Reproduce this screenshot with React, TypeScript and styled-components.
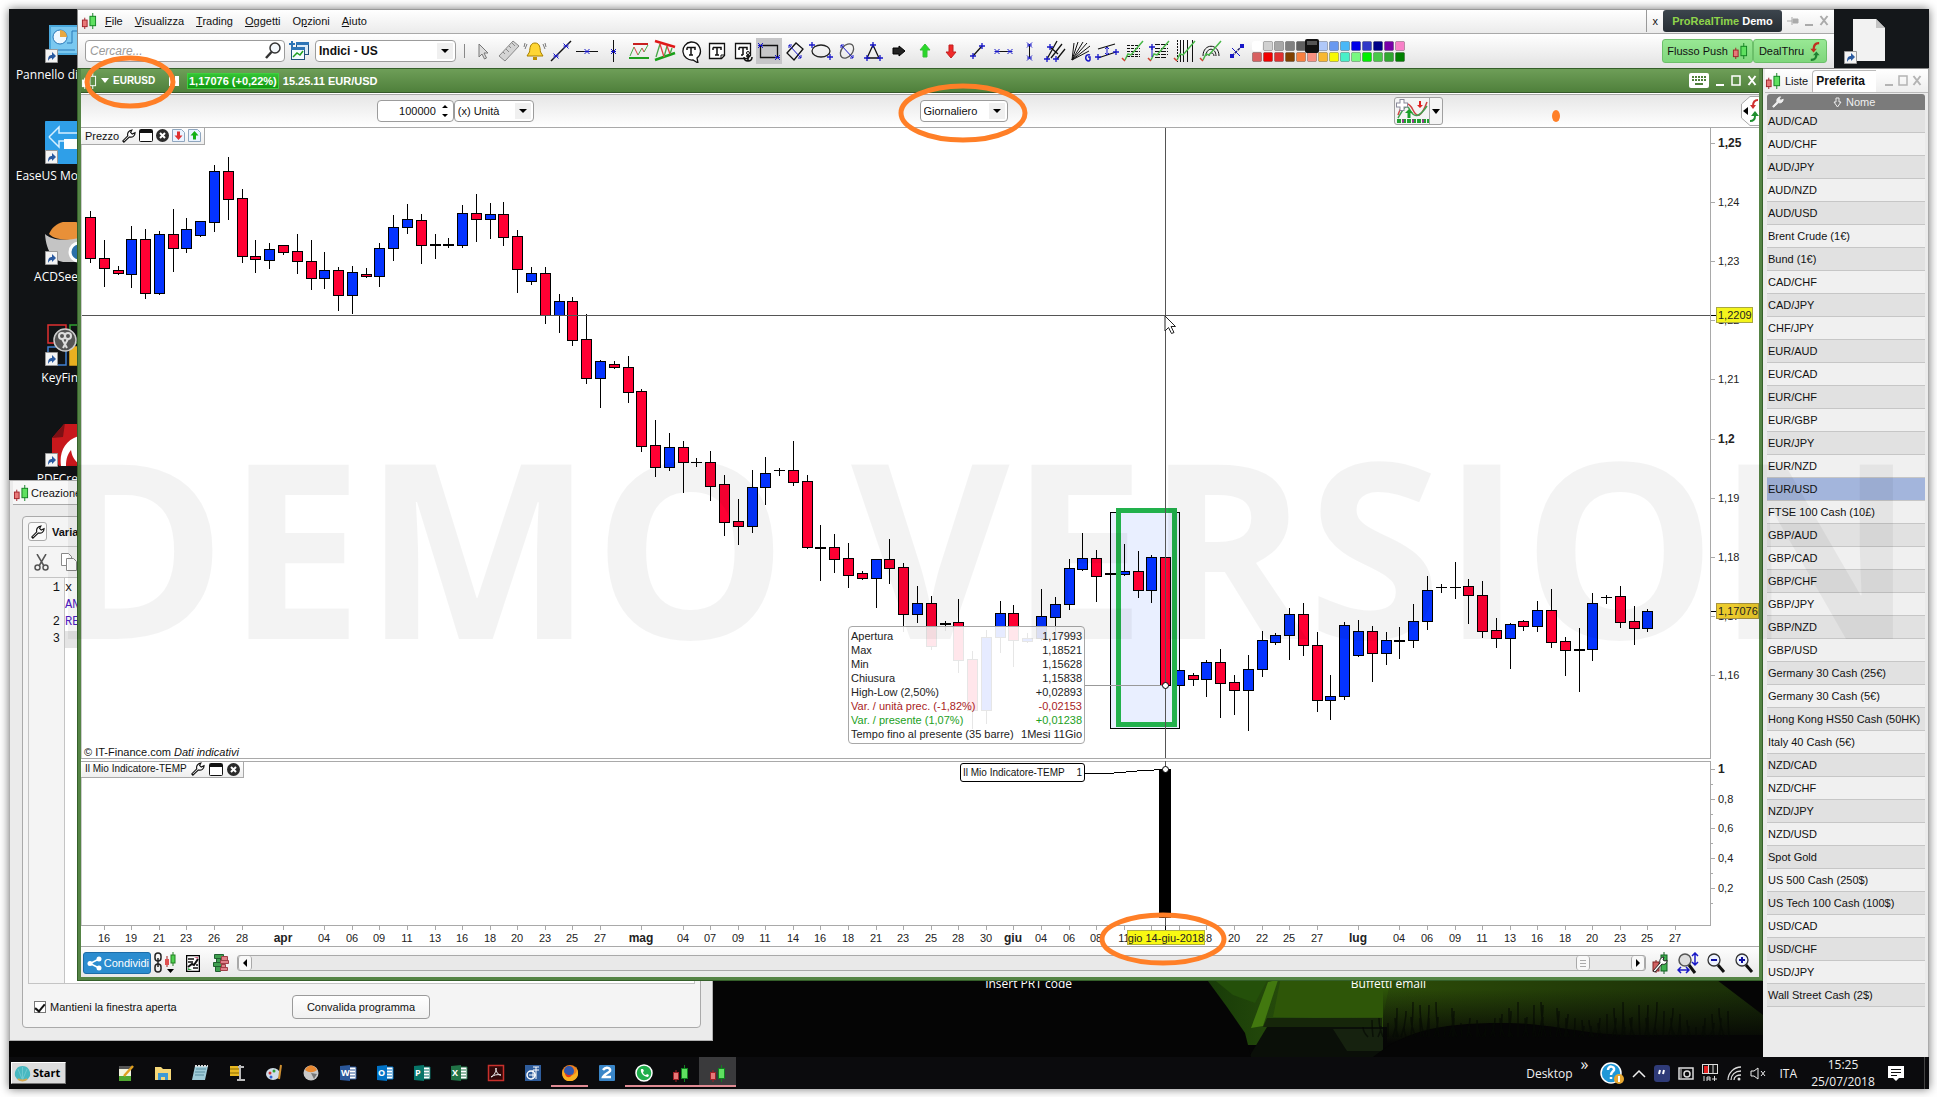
import React from 'react';
import styled, { createGlobalStyle, css } from 'styled-components';

const UI = '"Liberation Sans", Arial, sans-serif';
const SHELL = '"Open Sans", "Noto Sans", sans-serif';
const ORANGE = '#ff7f27';
const LINE = '#a9a9a9';

const Global = createGlobalStyle`
  * { box-sizing: border-box; }
  body { margin: 0; background: #fff; font: 11px/14px ${UI}; color: #111; }
  button, input, select { font: inherit; color: inherit; margin: 0; }
  svg { display: block; flex: none; }
`;

/* ---------- desktop ---------- */

const Page = styled.div`
  min-height: 100vh;
  padding: 9px 8px 8px 9px;
  display: flex;
  overflow: hidden;
`;
const Screen = styled.main`
  position: relative;
  flex: 1;
  overflow: hidden;
  display: flex;
  flex-direction: column;
  justify-content: space-between;
  background: #050505;
`;
const Frame = styled.div`
  flex: 1;
  display: flex;
  box-shadow: 0 0 9px rgba(0, 0, 0, 0.55);
`;
const Wallpaper = styled.svg`
  position: absolute;
  right: 166px;
  bottom: 32px;
`;
const Shortcuts = styled.nav`
  width: 69px;
  height: 471px;
  overflow: hidden;
  background: #111315;
  padding-top: 11px;
`;
const Shortcut = styled.a`
  height: 101px;
  display: flex;
  flex-direction: column;
  align-items: flex-end;
  gap: 2px;
  color: #fff;
  text-decoration: none;
  font: 12px/18px ${SHELL};
  white-space: nowrap;
`;
const FileCorner = styled.div`
  position: absolute;
  top: 0;
  right: 0;
  width: 95px;
  height: 59px;
  background: #14171a;
  padding: 10px 0 0 8px;
`;
const DesktopLabel = styled.a<{ $right: number }>`
  position: absolute;
  right: ${p => p.$right}px;
  bottom: 96px;
  color: #fff;
  text-decoration: none;
  font: 12px/18px ${SHELL};
`;

/* ---------- shared controls ---------- */

const IconButton = styled.button<{ $on?: boolean }>`
  border: 0;
  padding: 0;
  background: ${p => (p.$on ? '#c6c6c8' : 'none')};
  display: flex;
  align-items: center;
  justify-content: center;
`;
const Field = styled.label<{ $w: number }>`
  display: grid;
  align-items: center;
  width: ${p => p.$w}px;
  height: 22px;
  background: #fff;
  border: 1px solid #9c9c9c;
  border-radius: 4px;
  > * { grid-area: 1 / 1; }
  > svg { justify-self: end; pointer-events: none; }
`;
const fieldText = css`
  width: 100%;
  height: 20px;
  border: 0;
  background: none;
  outline: 0;
  padding: 0 4px;
`;
const SelectText = styled.select<{ $bold?: boolean }>`
  ${fieldText}
  appearance: none;
  padding: 0 3px;
  font-weight: ${p => (p.$bold ? 700 : 400)};
  font-size: ${p => (p.$bold ? 12 : 11)}px;
`;
const InputText = styled.input<{ $end?: boolean }>`
  ${fieldText}
  text-align: ${p => (p.$end ? 'right' : 'left')};
  padding-right: ${p => (p.$end ? 17 : 4)}px;
  &::placeholder { color: #9a9a9a; font-style: italic; opacity: 1; font-size: 12px; }
`;
const Spacer = styled.span`
  flex: 1;
`;

const Caret = () => (
  <svg width="20" height="20">
    <rect x="2" y="2" width="16" height="16" fill="#f0f0f0" />
    <path d="M6 8h8l-4 4z" fill="#000" />
  </svg>
);

type SelectProps = { label: string; value: string; width: number; bold?: boolean };
const Select = ({ label, value, width, bold }: SelectProps) => (
  <Field $w={width}>
    <SelectText aria-label={label} $bold={bold} defaultValue={value}>
      <option>{value}</option>
    </SelectText>
    <Caret />
  </Field>
);

/* ---------- small drawings ---------- */

const Candles = ({ size = 16, mono }: { size?: number; mono?: boolean }) => (
  <svg width={size} height={size} viewBox="0 0 17 17">
    <path d="M4 5v12" stroke={mono ? '#fff' : '#a02028'} />
    <rect x="1.5" y="7.5" width="5" height="7" fill={mono ? '#fff' : '#e87878'} stroke={mono ? '#fff' : '#a02028'} />
    <path d="M12.500 0v17" stroke={mono ? '#fff' : '#108020'} />
    <rect x="9.500" y="3.500" width="6" height="10" fill={mono ? '#5f9049' : '#5fe060'} stroke={mono ? '#fff' : '#108020'} />
  </svg>
);
const Wrench = ({ color = '#111', fill = '#fff', size = 14 }: { color?: string; fill?: string; size?: number }) => (
  <svg width={size} height={size} viewBox="0 0 15 15">
    <path d="M2 14.200 L.8 12.800 L6.200 7.400 C5.400 4.500 7 1.500 10.600 1 L9.200 3.600 L11 5.400 L14 4 C14 7.500 11.200 9.300 8 8.500z" fill={fill} stroke={color} strokeWidth="1.200" />
  </svg>
);
const WindowGlyph = () => (
  <svg width="14" height="13">
    <rect x=".5" y=".5" width="13" height="12" rx="1" fill="#fff" stroke="#111" />
    <path d="M1 1h12v3H1z" fill="#111" />
  </svg>
);
const CloseGlyph = () => (
  <svg width="13" height="13">
    <circle cx="6.500" cy="6.500" r="6.500" fill="#2b2b2b" />
    <path d="M4 4l5 5m0-5l-5 5" stroke="#fff" strokeWidth="2" />
  </svg>
);
const PageArrow = ({ up }: { up?: boolean }) => (
  <svg width="13" height="13">
    <path d="M.5.500h9l3 3v9H.500z" fill="#eaf3ff" stroke="#8fa6bf" />
    <path d={up ? 'M6.500 2l4 4.500h-2.500v4h-3v-4H2.500z' : 'M6.500 11l4-4.500h-2.500v-4h-3v4H2.500z'} fill={up ? '#12b012' : '#e03030'} />
  </svg>
);
const WinGlyphs = ({ color, box = true }: { color: string; box?: boolean }) => (
  <>
    <svg width="10" height="11"><path d="M1 10h8" stroke={color} strokeWidth="2" /></svg>
    {box && <svg width="10" height="11"><rect x="1" y="1" width="8" height="9" fill="none" stroke={color} strokeWidth="1.500" /></svg>}
    <svg width="10" height="11"><path d="M1.500 1l7 9m0-9l-7 9" stroke={color} strokeWidth="2" /></svg>
  </>
);
const DealArrows = ({ w = 14, h = 20 }: { w?: number; h?: number }) => (
  <svg width={w} height={h} viewBox="0 0 14 20">
    <path d="M12 1C7 1 6 4 6 8" fill="none" stroke="#c03020" strokeWidth="2.500" />
    <path d="M2.500 7h7L6 11z" fill="#c03020" />
    <path d="M3 19c5 0 6-2 6-6" fill="none" stroke="#1f8030" strokeWidth="2.500" />
    <path d="M5.500 14h7L9 10z" fill="#1f8030" />
  </svg>
);

const B = '#1818c8';
const X = ({ x, y }: { x: number; y: number }) => <path d={`M${x - 2.5} ${y - 2.5}l5 5m-5 0l5-5m-5 2.500h5`} stroke={B} fill="none" />;
const P = ({ x, y }: { x: number; y: number }) => <path d={`M${x - 3} ${y}h6m-3-3v6`} stroke={B} strokeWidth="1.300" fill="none" />;
const fibo = <g fill="none"><path d="M4 21l3-6 3 1L22 2" stroke="#48b848" strokeWidth="1.500" /><path d="M1 19l3 3" stroke="#d04030" strokeWidth="1.500" /></g>;

const tools: { name: string; on?: boolean; art: React.ReactNode }[] = [
  { name: 'Puntatore', art: <path d="M8 5v13l3-3 2.500 5 2-1-2.500-5h4z" fill="#ddd" stroke="#777" /> },
  { name: 'Righello', art: <g stroke="#888" fill="#d4d4d4"><path d="M2 17L16 2l6 5L8 22z" /><path d="M6 13l2 2m1-5l3 3m0-6l2 2m1-5l3 3" /></g> },
  { name: 'Allarme', art: <g><path d="M12 4c-5 0-5 5-5.500 9L4 17h16l-2.500-4C17 9 17 4 12 4z" fill="#ffd633" stroke="#a88000" /><path d="M10 18h4v3h-4z" fill="#c09000" /><path d="M4 5l-2 5m0-6l-1 4M20 5l2 5m0-6l1 4" stroke="#777" /></g> },
  { name: 'Linea', art: <g><path d="M2 22L22 2" stroke="#111" strokeWidth="1.500" /><X x={7} y={17} /><X x={17} y={7} /></g> },
  { name: 'Linea orizzontale', art: <g><path d="M1 12.500h22" stroke="#111" /><X x={12} y={12.5} /></g> },
  { name: 'Linea verticale', art: <g><path d="M12.500 1v22" stroke="#111" /><X x={12.5} y={12.5} /></g> },
  { name: 'Supporto e resistenza', art: <g fill="none"><path d="M6 5h15" stroke="#c82020" strokeWidth="2" /><path d="M2 19h20" stroke="#20a020" strokeWidth="2" /><path d="M3 17l4-9" stroke="#48a848" /><path d="M7 8l4 8" stroke="#d84040" /><path d="M11 16l4-7" stroke="#48a848" /><path d="M15 9l2 4" stroke="#d84040" /><path d="M17 13l4-7" stroke="#48a848" /></g> },
  { name: 'Canale automatico', art: <g fill="none"><path d="M2 2l20 6" stroke="#e01818" strokeWidth="2.500" /><path d="M2 21l20-7" stroke="#18a018" strokeWidth="2.500" /><path d="M3 18l4-13m4 13l3-11m3 8l2-6" stroke="#48a848" strokeWidth="1.300" /><path d="M7 5l4 13m3-11l3 8" stroke="#e04040" strokeWidth="1.300" /></g> },
  { name: 'Commento', art: <g><path d="M12 3a9 9 0 1 0 2 18l5 3-1-5A9 9 0 0 0 12 3z" fill="#fff" stroke="#111" strokeWidth="1.300" /><path d="M8 8.500h8v2.500m-8-2.500v2.500M12 8.500V16m-2 0h4" stroke="#111" strokeWidth="1.500" fill="none" /></g> },
  { name: 'Testo', art: <g><path d="M4.500 4.500h15v12l-3 3h-12z" fill="#fff" stroke="#111" strokeWidth="1.300" /><path d="M19 16h-3v3" stroke="#111" fill="none" /><path d="M8 8.500h8v2.500M8 8.500v2.500m4-2.500V16m-2 0h4" stroke="#111" strokeWidth="1.500" fill="none" /></g> },
  { name: 'Testo ancorato', art: <g><path d="M4.500 4.500h15v12l-3 3h-12z" fill="#fff" stroke="#111" strokeWidth="1.300" /><path d="M8 8.500h8v2.500M8 8.500v2.500m4-2.500V16m-2 0h2" stroke="#111" strokeWidth="1.500" fill="none" /><circle cx="17" cy="14" r="1.500" fill="#fff" stroke="#111" /><path d="M17 15v7m-4-4c0 3 2 4 4 4s4-1 4-4m-6-1h4" stroke="#111" strokeWidth="1.500" fill="none" /></g> },
  { name: 'Rettangolo', on: true, art: <g><path d="M3.500 6.500h17v12h-17z" fill="none" stroke="#111" strokeWidth="1.300" /><X x={3.5} y={6.5} /><X x={20.5} y={18.5} /></g> },
  { name: 'Rombo', art: <g><path d="M4 14L13 4l7 6-9 11z" fill="none" stroke="#111" strokeWidth="1.300" /><path d="M6 6l12 13M9 6H6v3m12 7v3h-3" stroke={B} fill="none" /></g> },
  { name: 'Ellisse', art: <g><ellipse cx="12" cy="12" rx="9" ry="6" fill="none" stroke="#222" strokeWidth="1.300" /><P x={3} y={6} /><P x={21} y={18} /></g> },
  { name: 'Ellisse inclinata', art: <g><ellipse cx="12" cy="12" rx="8" ry="5.500" transform="rotate(-50 12 12)" fill="none" stroke="#555" strokeWidth="1.300" /><path d="M6 6l12 13M9 6H6v3m12 7v3h-3" stroke={B} fill="none" /></g> },
  { name: 'Triangolo', art: <g><path d="M12 6l6 13H6z" fill="none" stroke="#111" strokeWidth="1.300" /><P x={12} y={6} /><P x={6} y={19} /><P x={19} y={19} /></g> },
  { name: 'Freccia destra', art: <path d="M6 9h6V7l6 5-6 5v-2H6z" fill="#222" stroke="#000" /> },
  { name: 'Freccia su', art: <path d="M12 5l5 6h-3v7h-4v-7H7z" fill="#28d828" stroke="#38c038" /> },
  { name: 'Freccia giù', art: <path d="M12 19l5-6h-3V6h-4v7H7z" fill="#f02828" stroke="#c02020" /> },
  { name: 'Segmento', art: <g><path d="M8 17l9-10" stroke="#111" strokeWidth="1.300" /><P x={8} y={17} /><P x={17} y={7} /></g> },
  { name: 'Segmento orizzontale', art: <g><path d="M5 12.500h14" stroke="#111" /><X x={6} y={12.5} /><X x={19} y={12.5} /></g> },
  { name: 'Segmento verticale', art: <g><path d="M12.500 5v14" stroke="#111" /><X x={12.5} y={6} /><X x={12.5} y={19} /></g> },
  { name: 'Forchetta', art: <g><path d="M4 20L14 2M8 19L19 5M14 20l8-10M7 8l8 7" stroke="#111" strokeWidth="1.300" /><P x={7} y={8} /><P x={4} y={20} /><P x={13} y={20} /></g> },
  { name: 'Ventaglio di Gann', art: <g><path d="M3 21L5 4M3 21L9 3M3 21L14 3M3 21L18 4M3 21l18-14M3 21l17-9" stroke="#111" /><path d="M21 16c-5-2-6 6-1 6l1-1v-3h-2" stroke={B} strokeWidth="1.500" fill="none" /></g> },
  { name: 'Canale', art: <g><path d="M3 10l17-5M3 19l18-6" stroke="#111" strokeWidth="1.300" /><P x={3} y={18} /><P x={21} y={13} /><path d="M12 8v8m-2-6l2-2 2 2m-4 4l2 2 2-2" stroke={B} fill="none" /></g> },
  { name: 'Ritracciamento', art: <g><path d="M6 6.500h13M6 9.500h13M6 12.500h13M6 15.500h13M6 17.500h13" stroke="#111" strokeDasharray="3 1" />{fibo}</g> },
  { name: 'Estensione', art: <g><path d="M8 5.500h13M8 9.500h13M8 12.500h13M8 15.500h13M8 18.500h12" stroke="#111" strokeDasharray="5 1" />{fibo}<P x={5} y={8} /><path d="M5 8v10" stroke={B} /></g> },
  { name: 'Tempo di Fibonacci', art: <g><path d="M4.500 1v22" stroke="#111" strokeDasharray="2 1" /><path d="M7.500 1v22M10.500 1v22M14.500 1v22M19.500 1v22" stroke="#111" />{fibo}</g> },
  { name: 'Archi', art: <g><path d="M4 17c0-13 16-13 16 0M7 17c0-9 10-9 10 0M10 17c0-4 5-4 5 0" fill="none" stroke="#111" />{fibo}</g> },
  { name: 'Collegamento', art: <g><path d="M7 17L17 7" stroke="#226" strokeWidth="1.500" strokeDasharray="3 1" /><g fill={B}><rect x="5" y="15" width="4" height="4" /><rect x="15" y="5" width="4" height="4" /></g><path d="M7 9l8 8" stroke={B} /></g> },
];

const palette = [
  ['#fff', '#d0d0d0', '#a8a8a8', '#808080', '#606060', '#000', '#b0c8f8', '#6898f0', '#48b8f8', '#0000e8', '#3038c8', '#000088', '#7800a8', '#f880c8'],
  ['#d86060', '#f00000', '#e03030', '#804000', '#f88040', '#f89080', '#f8b830', '#f8f800', '#48f0c8', '#78f880', '#00f000', '#48c848', '#30a830', '#008000'],
];

/* ---------- main window with menu and tools ---------- */

const MainWindow = styled.header`
  position: absolute;
  top: 0;
  left: 68px;
  right: 95px;
  height: 59px;
  border-left: 1px solid #888;
  border-top: 1px solid #999;
  background: #fff;
`;
const MenuBar = styled.div`
  height: 24px;
  display: flex;
  align-items: center;
  padding: 0 0 2px 3px;
  border-bottom: 1px solid ${LINE};
  background: linear-gradient(#fff, #ebebeb);
`;
const Menu = styled.nav`
  display: flex;
  gap: 12px;
  margin-left: 8px;
`;
const MenuItem = styled.button`
  border: 0;
  padding: 0;
  background: none;
  line-height: 16px;
`;
const Badge = styled.strong`
  display: flex;
  align-items: center;
  justify-content: center;
  gap: 3px;
  width: 119px;
  height: 22px;
  border-radius: 3px;
  background: linear-gradient(#3c454d, #262d33);
  color: #fff;
  em { font-style: normal; color: #8fd44a; }
`;
const MenuEnd = styled.div`
  display: flex;
  align-items: center;
  gap: 5px;
  height: 22px;
  padding: 0 5px 0 6px;
  border-left: 1px solid #999;
`;
const ToolBar = styled.div`
  height: 34px;
  display: flex;
  align-items: center;
  padding: 0 7px 0 7px;
  background: linear-gradient(#fff, #e2e2e2);
`;
const Tool = styled(IconButton)`
  width: 26px;
  height: 26px;
`;
const Divider = styled.span`
  width: 1px;
  height: 14px;
  background: #888;
  margin: 0 5px 0 8px;
`;
const GreenButton = styled.button<{ $w: number }>`
  width: ${p => p.$w}px;
  height: 24px;
  display: flex;
  align-items: center;
  justify-content: center;
  gap: 4px;
  padding: 0;
  border: 1px solid #6cc06a;
  border-radius: 3px;
  background: linear-gradient(#98e894, #7fd67c);
`;

const MainBar = () => (
  <MainWindow>
    <MenuBar>
      <Candles />
      <Menu aria-label="Menu principale">
        <MenuItem><u>F</u>ile</MenuItem>
        <MenuItem><u>V</u>isualizza</MenuItem>
        <MenuItem><u>T</u>rading</MenuItem>
        <MenuItem><u>O</u>ggetti</MenuItem>
        <MenuItem>O<u>p</u>zioni</MenuItem>
        <MenuItem><u>A</u>iuto</MenuItem>
      </Menu>
      <Spacer />
      <MenuEnd>
        <IconButton>x</IconButton>
        <Badge><em>ProRealTime</em> Demo</Badge>
        <svg width="12" height="12"><path d="M0 6h5M5 2v8M6 4h5v4H6z" stroke="#aaa" fill="#aaa" /></svg>
        <WinGlyphs color="#aaa" box={false} />
      </MenuEnd>
    </MenuBar>
    <ToolBar>
      <Field $w={200}>
        <InputText aria-label="Cercare" placeholder="Cercare..." />
        <svg width="20" height="20">
          <circle cx="11" cy="7" r="5" fill="#f4f8fc" stroke="#333" strokeWidth="1.500" />
          <path d="M7.500 11L2 17" stroke="#333" strokeWidth="2.500" />
        </svg>
      </Field>
      <IconButton aria-label="Nuova lista">
        <svg width="30" height="24">
          <rect x="11.500" y="3.500" width="12" height="12" fill="#dcebf8" stroke="#22507c" />
          <path d="M11 3h13v3H11z" fill="#2e75b6" />
          <rect x="6.500" y="8.500" width="13" height="12" fill="#f4faff" stroke="#22507c" />
          <path d="M6 8h14v3H6z" fill="#2e75b6" />
          <path d="M8 18l4-4 3 2 3-4" stroke="#20a020" strokeWidth="1.500" fill="none" />
          <path d="M4 5h6M7 2v6" stroke="#2e75b6" strokeWidth="2" />
        </svg>
      </IconButton>
      <Select label="Lista" value="Indici - US" width={141} bold />
      <Divider />
      {tools.map(t => (
        <Tool key={t.name} aria-label={t.name} $on={t.on}>
          <svg width="24" height="24">{t.art}</svg>
        </Tool>
      ))}
      <svg width="157" height="26">
        {palette.map((row, r) => row.map((c, i) => (
          <rect key={`${r}${i}`} x={2.5 + i * 11} y={3.5 + r * 11} width="9" height="9" rx="1" fill={c} stroke={c === '#fff' ? '#fff' : 'rgba(0,0,0,.25)'} />
        )))}
        <rect x="55" y="1" width="14" height="14" rx="2" fill="#111" />
        <path d="M57 3h10v4H57z" fill="#555" />
      </svg>
      <Spacer />
      <GreenButton $w={91}>Flusso Push <Candles size={16} /></GreenButton>
      <GreenButton $w={74}>DealThru <DealArrows w={13} h={19} /></GreenButton>
    </ToolBar>
  </MainWindow>
);

/* ---------- chart data ---------- */

const STEP = 13.783;
const FIRST = 9;
const at = (i: number) => Math.round(FIRST + STEP * i);

// high, body top, body bottom, low in pane rows; r = down, b = up, k = unchanged
const series = `83 89 130 134 r|112 130 140 158 r|138 142 145 146 r|98 111 146 159 b|101 111 165 170 r|103 106 165 166 b|81 106 120 143 r|90 101 120 124 b|93 93 107 108 b|37 43 94 103 b
29 43 71 91 r|61 70 128 134 r|112 128 131 144 r|115 121 132 140 b|117 117 124 126 r|106 123 133 145 r|112 133 150 161 r|124 142 150 160 b|139 142 167 182 r|138 144 167 185 b
140 146 148 149 r|115 120 148 158 b|87 99 120 132 b|76 91 99 105 b|86 92 117 135 r|106 116 117 130 k|110 116 117 119 k|77 85 117 119 b|66 85 91 113 r|75 86 91 110 b
74 86 109 117 r|102 108 141 164 r|139 145 153 156 b|139 145 187 195 r|166 173 187 204 b|169 173 212 217 r|186 211 250 255 r|232 233 250 279 b|233 236 239 240 r|228 239 264 274 r
261 263 318 323 r|292 317 339 348 r|305 319 339 342 b|313 319 334 364 r|330 334 334 338 k|323 334 358 372 r|347 356 394 407 r|371 393 398 416 r|342 359 398 404 b|329 345 359 376 b
340 342 342 347 k|313 342 354 357 r|347 353 419 420 r|397 419 420 452 k|406 419 431 444 r|415 430 447 459 r|443 445 450 451 r|431 431 450 479 b|411 431 440 455 r|435 439 486 503 r
458 475 486 494 b|468 475 518 521 r|493 495 496 502 k|471 494 532 544 r|523 531 582 600 r|502 509 582 595 b|473 485 509 524 b|477 485 512 538 r|505 510 513 514 b|461 488 510 512 b
469 476 489 503 b|431 440 476 481 b|405 430 441 442 b|422 430 448 473 r|445 445 446 446 k|416 443 446 447 b|423 443 462 469 r|427 429 462 474 b|398 429 557 570 r|542 542 557 557 b
545 547 551 557 r|532 534 551 568 b|521 534 555 589 r|547 554 562 586 r|527 541 562 602 b|503 512 541 548 b|505 507 514 516 b|480 486 507 531 b|475 486 517 527 r|504 517 572 583 r
547 568 572 591 b|494 497 568 571 b|492 503 527 528 b|498 503 525 553 r|504 512 525 536 b|499 512 513 530 k|476 493 512 519 b|448 462 493 501 b|456 459 459 464 k|434 459 459 470 k
451 458 467 495 r|453 467 503 509 r|490 502 510 519 r|495 496 510 540 b|492 493 498 502 r|473 482 498 503 b|461 482 514 519 r|509 513 522 547 r|500 521 522 563 k|465 475 521 532 b
467 469 469 475 k|458 468 494 499 r|478 493 500 516 r|481 483 500 503 b`
  .split(/[|\n]/)
  .map(s => {
    const [h, t, b, l, k] = s.split(' ');
    return { high: +h, top: +t, bottom: +b, low: +l, kind: k };
  });

const dates: [number, string][] = [
  [1, '16'], [3, '19'], [5, '21'], [7, '23'], [9, '26'], [11, '28'], [14, 'apr'], [17, '04'], [19, '06'], [21, '09'], [23, '11'], [25, '13'],
  [27, '16'], [29, '18'], [31, '20'], [33, '23'], [35, '25'], [37, '27'], [40, 'mag'], [43, '04'], [45, '07'], [47, '09'], [49, '11'], [51, '14'],
  [53, '16'], [55, '18'], [57, '21'], [59, '23'], [61, '25'], [63, '28'], [65, '30'], [67, 'giu'], [69, '04'], [71, '06'], [73, '08'], [75, '11'],
  [77, ''], [79, ''], [81, '18'], [83, '20'], [85, '22'], [87, '25'], [89, '27'], [92, 'lug'], [95, '04'], [97, '06'], [99, '09'], [101, '11'],
  [103, '13'], [105, '16'], [107, '18'], [109, '20'], [111, '23'], [113, '25'], [115, '27'],
];
const prices = ['1,25', '1,24', '1,23', '1,22', '1,21', '1,2', '1,19', '1,18', '1,17', '1,16'];

/* ---------- chart window ---------- */

const ChartWindow = styled.section`
  position: absolute;
  top: 59px;
  left: 68px;
  right: 166px;
  border: solid #558445;
  border-width: 0 4px 4px;
  background: #fff;
  outline: 1px solid #35602a;
  outline-offset: -1px;
`;
const TitleBar = styled.div`
  height: 25px;
  display: flex;
  align-items: center;
  gap: 4px;
  border: solid #35582a;
  border-width: 1px 0;
  background: linear-gradient(#6e9e58, #4f803b);
  color: #fff;
  font-weight: 700;
`;
const Symbol = styled.span`
  width: 51px;
  font-size: 10px;
`;
const Quote = styled.span`
  margin-left: 3px;
  padding: 0 1px;
  border: 1px solid #3fd03f;
  background: linear-gradient(#35c435, #119911);
`;
const TitleEnd = styled.div`
  display: flex;
  align-items: center;
  gap: 6px;
  padding-right: 2px;
`;
const OrderBar = styled.div`
  height: 34px;
  margin-top: 1px;
  display: flex;
  align-items: center;
  border: solid ${LINE};
  border-width: 1px 0;
  background: linear-gradient(#e6e6e6, #fff);
`;
const Cell = styled.div<{ $grow: number }>`
  flex: ${p => p.$grow} 1 0;
`;
const SplitButton = styled.button`
  height: 28px;
  width: 49px;
  padding: 0;
  border: 1px solid #a0a0a0;
  border-radius: 3px;
  background: #f4f4f4;
`;
const Pane = styled.div<{ $h: number; $top?: boolean }>`
  position: relative;
  display: grid;
  grid-template-columns: 1fr 48px;
  height: ${p => p.$h}px;
  margin-top: ${p => (p.$top ? 2 : 0)}px;
  background: linear-gradient(${LINE}, ${LINE}) bottom left / calc(100% - 48px) 1px no-repeat,
    linear-gradient(${LINE}, ${LINE}) top left / calc(100% - 48px) ${p => (p.$top ? 1 : 0)}px no-repeat, #fff;
`;
const Plot = styled.svg`
  width: 100%;
  height: 100%;
  border: solid ${LINE};
  border-width: 0 1px 0 0;
  shape-rendering: crispEdges;
`;
const Axis = styled.svg`
  width: 48px;
  height: 100%;
  overflow: visible;
`;
const AxisText = styled.text<{ $bold?: boolean; $mid?: boolean }>`
  font-family: ${UI};
  font-size: ${p => (p.$bold ? 12 : 11)}px;
  font-weight: ${p => (p.$bold ? 700 : 400)};
  text-anchor: ${p => (p.$mid ? 'middle' : 'start')};
  fill: #222;
`;
const PaneLabel = styled.div<{ $small?: boolean }>`
  position: absolute;
  top: 0;
  left: 0;
  height: 17px;
  display: flex;
  align-items: center;
  gap: ${p => (p.$small ? 4 : 3)}px;
  padding: 0 3px 1px 4px;
  border: solid ${LINE};
  border-width: ${p => (p.$small ? 1 : 0)}px 1px 1px 0;
  background: linear-gradient(#fff, #eee);
  font-size: ${p => (p.$small ? 10 : 11)}px;
  white-space: nowrap;
`;
const Credit = styled.p`
  position: absolute;
  left: 3px;
  bottom: 1px;
  margin: 0;
  line-height: 12px;
`;
const Info = styled.table`
  position: absolute;
  left: 767px;
  top: 498px;
  width: 237px;
  border: 1px solid #a8a8a8;
  border-radius: 4px;
  background: rgba(255, 255, 255, 0.9);
  border-spacing: 0;
  padding: 2px 0;
  td { padding: 0 2px; line-height: 14px; white-space: nowrap; }
  td + td { text-align: right; }
`;
const InfoRow = styled.tr<{ $color?: string }>`
  color: ${p => p.$color || '#222'};
`;
const IndicatorTag = styled.output`
  position: absolute;
  left: 879px;
  top: 2px;
  width: 125px;
  height: 19px;
  display: flex;
  justify-content: space-between;
  align-items: center;
  padding: 0 2px;
  border: 1px solid #000;
  border-radius: 3px;
  background: #fff;
  font-size: 10px;
`;
const Dates = styled.svg`
  width: 100%;
  height: 21px;
  border-bottom: 1px solid ${LINE};
`;
const BottomBar = styled.footer`
  height: 30px;
  display: flex;
  align-items: center;
  padding: 2px 1px 0 2px;
  background: linear-gradient(#fdfdfd, #e8e8e8);
`;
const Share = styled.button`
  width: 68px;
  height: 22px;
  display: flex;
  align-items: center;
  justify-content: space-between;
  padding: 0 1px 0 3px;
  border: 1px solid #1c6ca8;
  border-radius: 3px;
  background: #2b8ccf;
  color: #fff;
`;
const Scroll = styled.div`
  flex: 1;
  height: 16px;
  display: flex;
  justify-content: space-between;
  margin: 0 0 0 2px;
  border: 1px solid ${LINE};
  border-radius: 3px;
  background: #e9e9e9;
`;
const ScrollPiece = styled.button<{ $gap?: number }>`
  width: 14px;
  padding: 0;
  border: solid ${LINE};
  border-width: 0 1px;
  border-radius: 3px;
  background: #f8f8f8;
  display: grid;
  place-items: center;
  margin-right: ${p => p.$gap || 0}px;
`;
const ScrollEnd = styled.div`
  display: flex;
`;
const BarIcon = styled(IconButton)`
  width: 28px;
  height: 26px;
`;

const info: [string, string, string?][] = [
  ['Apertura', '1,17993'],
  ['Max', '1,18521'],
  ['Min', '1,15628'],
  ['Chiusura', '1,15838'],
  ['High-Low (2,50%)', '+0,02893'],
  ['Var. / unità prec. (-1,82%)', '-0,02153', '#a81c24'],
  ['Var. / presente (1,07%)', '+0,01238', '#22a022'],
  ['Tempo fino al presente (35 barre)', '1Mesi 11Gio'],
];
const fills: Record<string, string> = { r: '#ff0033', b: '#0433ff', k: '#000' };

const PricePane = () => (
  <Pane $h={631}>
    <Plot role="img" aria-label="Grafico EUR/USD">
      <rect x="1029.500" y="384.500" width="69" height="216" fill="#e9efff" stroke="#000" />
      {series.map((c, i) => {
        const x = at(i);
        const flat = c.kind === 'k';
        return (
          <g key={i}>
            <path d={`M${x + 0.5} ${c.high}V${c.low + 1}`} stroke="#000" />
            {flat
              ? <rect x={x - 5} y={c.top} width="11" height={c.bottom - c.top + 1} fill="#000" />
              : <rect x={x - 4.5} y={c.top + 0.5} width="10" height={c.bottom - c.top} fill={fills[c.kind]} stroke="#000" />}
          </g>
        );
      })}
      <rect x="1037.500" y="382.500" width="56" height="214" fill="none" stroke="#22b14c" strokeWidth="5" />
      <path d="M1004 557.500h80" stroke="#999" />
      <path d="M0 187.500h1800M1084.500 0v630" stroke="#555" />
      <path d="M.500 0v630" stroke="#ccc" />
      <circle cx="1084.500" cy="557.500" r="3" fill="#fff" stroke="#000" shapeRendering="auto" />
      <path d="M1084 188v15l3.500-3.500 3 6 2.500-1-3-6h4.500z" fill="#fff" stroke="#222" shapeRendering="auto" />
    </Plot>
    <Axis>
      {prices.map((p, i) => {
        const y = Math.round(15 + i * 59.1);
        return (
          <g key={p}>
            <path d={`M0 ${y + 0.5}h4`} stroke={LINE} />
            <AxisText x="7" y={y + 4} $bold={p === '1,25' || p === '1,2'}>{p}</AxisText>
          </g>
        );
      })}
      <path d="M0 187.500h5M0 483.500h5" stroke="#000" />
      <rect x="5.500" y="179.500" width="36" height="15" fill="#f4f41c" stroke="#a8a840" />
      <AxisText x="7" y="191">1,2209</AxisText>
      <rect x="5.500" y="475.500" width="42" height="15" fill="#eccb2c" stroke="#a89440" />
      <AxisText x="7" y="487">1,17076</AxisText>
    </Axis>
    <PaneLabel>Prezzo <Wrench /><WindowGlyph /><CloseGlyph /><PageArrow /><PageArrow up /></PaneLabel>
    <Credit>© IT-Finance.com <i>Dati indicativi</i></Credit>
    <Info>
      <tbody>
        {info.map(([k, v, color]) => <InfoRow key={k} $color={color}><td>{k}</td><td>{v}</td></InfoRow>)}
      </tbody>
    </Info>
  </Pane>
);

const IndicatorPane = () => (
  <Pane $h={165} $top>
    <Plot role="img" aria-label="Il Mio Indicatore">
      <path d="M1084.500 0v165" stroke="#555" />
      <rect x="1078" y="8" width="12" height="149" fill="#000" />
      <path d="M1004 12.500h22l14-1 22-2 22-1" stroke="#000" fill="none" />
      <path d="M.500 0v164" stroke="#ccc" />
      <circle cx="1084.500" cy="8.500" r="3" fill="#fff" stroke="#000" shapeRendering="auto" />
    </Plot>
    <Axis>
      {['1', '0,8', '0,6', '0,4', '0,2'].map((t, i) => {
        const y = Math.round(8 + i * 29.7);
        return (
          <g key={t}>
            <path d={`M0 ${y + 0.5}h4M0 ${y + 15.5}h2`} stroke={LINE} />
            <AxisText x="7" y={y + 4} $bold={i === 0}>{t}</AxisText>
          </g>
        );
      })}
    </Axis>
    <PaneLabel $small>Il Mio Indicatore-TEMP <Wrench /><WindowGlyph /><CloseGlyph /></PaneLabel>
    <IndicatorTag><span>Il Mio Indicatore-TEMP</span><span>1</span></IndicatorTag>
  </Pane>
);

const Magnifier = ({ sign }: { sign: string }) => (
  <svg width="20" height="22">
    <circle cx="8" cy="8" r="6" fill="#eef3ff" stroke="#333" strokeWidth="1.300" />
    <path d="M12 13l6 7" stroke="#111" strokeWidth="3" />
    <path d={sign} stroke="#1010a0" strokeWidth="2" />
  </svg>
);

const Chart = () => (
  <ChartWindow>
    <TitleBar>
      <Candles mono />
      <svg width="8" height="5"><path d="M0 0h8L4 5z" fill="#fff" /></svg>
      <Symbol>EURUSD</Symbol>
      <svg width="12" height="12"><path d="M1 1h10v10H1z" fill="#fff" /><path d="M6 1v4" stroke="#5f9049" strokeWidth="2" /></svg>
      <Quote>1,17076 (+0,22%)</Quote>
      <span>15.25.11 EUR/USD</span>
      <Spacer />
      <TitleEnd>
        <svg width="20" height="15">
          <rect width="20" height="15" rx="2" fill="#fff" />
          <path d="M3 4h14M3 7h14" stroke="#4f803b" strokeWidth="2" strokeDasharray="2 1" />
          <path d="M6 11h8" stroke="#4f803b" strokeWidth="2" />
        </svg>
        <WinGlyphs color="#fff" />
      </TitleEnd>
    </TitleBar>
    <OrderBar>
      <Cell $grow={296} />
      <Field $w={77}>
        <InputText aria-label="Quantità" defaultValue="100000" $end />
        <svg width="16" height="20"><path d="M5 7h6L8 4zM5 13h6l-3 3z" fill="#000" /></svg>
      </Field>
      <Select label="Unità" value="(x) Unità" width={80} />
      <Cell $grow={386} />
      <Select label="Periodo" value="Giornaliero" width={88} />
      <Cell $grow={387} />
      <SplitButton aria-label="Indicatori">
        <svg width="47" height="26">
          <path d="M2 23h32" stroke="#20a030" strokeWidth="4" strokeDasharray="4 1" />
          <path d="M7 23h2m8 0h2m8 0h2" stroke="#a03090" strokeWidth="3" />
          <path d="M3 17C8 2 14 4 18 12s8 8 14-8" stroke="#d04040" fill="none" strokeWidth="1.500" />
          <path d="M3 20c5-8 8-16 12-8s9 8 17-4" stroke="#40a050" fill="none" strokeWidth="1.500" />
          <path d="M14 11l4 4h-2.500v5h-3v-5H10z" fill="#18a028" />
          <path d="M25 10l3-3h-2V3h-2v4h-2z" fill="#e02020" />
          <path d="M7 1v12M1 7h12" stroke="#889" strokeWidth="5" /><path d="M7 2v10M2 7h10" stroke="#fff" strokeWidth="3" />
          <path d="M34.500 0v26" stroke={LINE} /><path d="M37 11h8l-4 5z" />
        </svg>
      </SplitButton>
      <Cell $grow={298} />
      <svg width="18" height="30">
        <path d="M18 .500H9L.500 8v14L9 29.500h9" fill="#fff" stroke={LINE} />
        <path d="M2 15l5-4v8z" />
        <path d="M17 4c-4 0-5 2-5 6" stroke="#d03030" fill="none" strokeWidth="2" /><path d="M9 9h6l-3 4z" fill="#d03030" />
        <path d="M9 25c4 0 5-2 5-5" stroke="#209030" fill="none" strokeWidth="2" /><path d="M10 20h8l-4-5z" fill="#209030" />
      </svg>
    </OrderBar>
    <PricePane />
    <IndicatorPane />
    <Dates role="img" aria-label="Date">
      {dates.map(([i, t]) => (
        <g key={i}>
          <path d={`M${at(i) + 0.5} 0v4`} stroke={LINE} />
          <AxisText x={at(i)} y="16" $mid $bold={t.length === 3}>{t}</AxisText>
        </g>
      ))}
      <path d="M1084.500 0v6" stroke="#000" />
      <rect x="1046.500" y="4.500" width="77" height="14" fill="#f8f812" stroke="#b0b040" />
      <AxisText x="1085" y="16" $mid>gio 14-giu-2018</AxisText>
    </Dates>
    <BottomBar>
      <Share>
        <svg width="15" height="15"><path d="M12 3L3 7.500l9 4.500" stroke="#fff" strokeWidth="1.500" fill="none" /><g fill="#fff"><circle cx="12" cy="3" r="2.500" /><circle cx="3" cy="7.500" r="2.500" /><circle cx="12" cy="12" r="2.500" /></g></svg>
        Condividi
      </Share>
      <BarIcon aria-label="Collega">
        <svg width="24" height="22"><g fill="none" stroke="#222" strokeWidth="1.500"><rect x="2" y="1" width="6" height="8" rx="3" /><rect x="2" y="12" width="6" height="8" rx="3" /><path d="M5 6v9" /></g><path d="M14 4v11" stroke="#a02020" /><rect x="12" y="7" width="4" height="6" fill="#e05050" /><path d="M20 0v14" stroke="#208020" /><rect x="18" y="3" width="4" height="8" fill="#50d050" stroke="#208020" /><path d="M14 17h7l-3.500 4z" /></svg>
      </BarIcon>
      <BarIcon aria-label="Rapporto">
        <svg width="14" height="17"><rect x=".5" y=".5" width="13" height="16" fill="#fff" stroke="#000" strokeWidth="1.500" /><path d="M2 4h6m-6 3h5m3 3h2m-5 3h5" stroke="#111" strokeWidth="1.500" fill="none" /><path d="M2 12l4-3 2 1 4-6" stroke="#111" strokeWidth="2" fill="none" /><path d="M8 2h4v2z" fill="#d06080" /><path d="M2 13l4 2H2z" fill="#30a040" /></svg>
      </BarIcon>
      <BarIcon aria-label="Profondità">
        <svg width="18" height="20"><g fill="#3f9f50" stroke="#206030"><path d="M2.500 1.500h9v4h-9zM4.500 5.500h4v4h-4zM1.500 9.500h8v4h-8zM3.500 13.500h5v5h-5z" /></g><g fill="#e08088" stroke="#a04048"><path d="M9.500 3.500h6v4h-6zM8.500 7.500h8v3h-8zM9.500 11.500h4v3h-4zM8.500 14.500h7v3h-7z" /></g></svg>
      </BarIcon>
      <Scroll>
        <ScrollPiece aria-label="Indietro"><svg width="4" height="8"><path d="M4 0v8L0 4z" /></svg></ScrollPiece>
        <ScrollEnd>
          <ScrollPiece aria-label="Posizione" $gap={41}><svg width="8" height="8"><path d="M1 1.500h6M1 4.500h6M1 7.500h6" stroke="#aaa" /></svg></ScrollPiece>
          <ScrollPiece aria-label="Avanti"><svg width="4" height="8"><path d="M0 0v8l4-4z" /></svg></ScrollPiece>
        </ScrollEnd>
      </Scroll>
      <BarIcon aria-label="Impostazioni"><svg width="17" height="22"><path d="M4 8v13" stroke="#802020" /><rect x="1" y="10" width="6" height="9" fill="#d06060" stroke="#802020" /><path d="M12 0v22" stroke="#106020" /><rect x="9" y="3" width="6" height="16" fill="#40b050" stroke="#106020" /><path d="M1 19l7-8c-1-3 1-6 4-6l-1 3 2 1 2-1c0 4-3 5-5 4l-7 8z" fill="#fff" stroke="#222" /></svg></BarIcon>
      <BarIcon aria-label="Adatta"><svg width="22" height="22"><circle cx="8" cy="8" r="6" fill="#ddd" stroke="#555" strokeWidth="1.500" /><path d="M12 13l6 8" stroke="#111" strokeWidth="3" /><path d="M18 1v12m-3-9l3-3 3 3m-6 6l3 3 3-3M1 18h11m-8-3l-3 3 3 3m5-6l3 3-3 3" stroke={B} strokeWidth="1.500" fill="none" /></svg></BarIcon>
      <BarIcon aria-label="Riduci"><Magnifier sign="M5 8h6" /></BarIcon>
      <BarIcon aria-label="Ingrandisci"><Magnifier sign="M5 8h6M8 5v6" /></BarIcon>
    </BottomBar>
  </ChartWindow>
);

/* ---------- instrument list ---------- */

const instruments = [
  'AUD/CAD', 'AUD/CHF', 'AUD/JPY', 'AUD/NZD', 'AUD/USD', 'Brent Crude (1€)', 'Bund (1€)', 'CAD/CHF', 'CAD/JPY', 'CHF/JPY',
  'EUR/AUD', 'EUR/CAD', 'EUR/CHF', 'EUR/GBP', 'EUR/JPY', 'EUR/NZD', 'EUR/USD', 'FTSE 100 Cash (10£)', 'GBP/AUD', 'GBP/CAD',
  'GBP/CHF', 'GBP/JPY', 'GBP/NZD', 'GBP/USD', 'Germany 30 Cash (25€)', 'Germany 30 Cash (5€)', 'Hong Kong HS50 Cash (50HK)',
  'Italy 40 Cash (5€)', 'NZD/CAD', 'NZD/CHF', 'NZD/JPY', 'NZD/USD', 'Spot Gold', 'US 500 Cash (250$)', 'US Tech 100 Cash (100$)',
  'USD/CAD', 'USD/CHF', 'USD/JPY', 'Wall Street Cash (2$)',
];

const ListWindow = styled.aside`
  position: absolute;
  top: 59px;
  right: 0;
  bottom: 32px;
  width: 166px;
  padding: 0 3px 0 4px;
  border-top: 1px solid #888;
  border-right: 1px solid #aaa;
  background: #ebebeb;
  overflow: hidden;
`;
const ListTitle = styled.div`
  height: 24px;
  display: flex;
  align-items: center;
  gap: 4px;
  border-bottom: 1px solid #bbb;
  background: linear-gradient(#fff, #eee);
  margin: 0 -3px 1px -2px;
  padding-right: 6px;
`;
const Tab = styled.strong`
  width: 65px;
  height: 22px;
  padding: 0 3px;
  border: 1px solid #bbb;
  border-width: 1px 0 0 1px;
  border-radius: 4px 0 0 0;
  background: #fff;
  font-size: 12px;
  line-height: 21px;
`;
const List = styled.table`
  width: 100%;
  border-spacing: 0;
`;
const HeadCell = styled.th`
  height: 16px;
  padding: 0;
  background: #7b7b7b;
  color: #f0f0f0;
  font-weight: 400;
  border-radius: 3px 3px 0 0;
  div { display: flex; align-items: center; gap: 4px; padding: 0 5px; }
  svg:first-child { margin-right: 45px; }
`;
const Row = styled.tr<{ $on: boolean }>`
  background: ${p => (p.$on ? '#a3b5dc' : '#f0f0f0')};
  &:nth-child(odd) { background: ${p => (p.$on ? '#a3b5dc' : '#e1e1e1')}; }
  td { height: 23px; padding: 0 1px; border-bottom: 1px solid #c6c6c6; white-space: nowrap; }
`;

const ListPanel = () => (
  <ListWindow>
    <ListTitle>
      <Candles />
      Liste
      <Tab>Preferita</Tab>
      <Spacer />
      <WinGlyphs color="#b4b4b4" />
    </ListTitle>
    <List>
      <thead>
        <tr>
          <HeadCell>
            <div>
              <Wrench color="#eee" fill="#eee" size={12} />
              <svg width="9" height="11"><path d="M3 1h3v4h2L4.500 10 1 5h2z" fill="none" stroke="#eee" /></svg>
              Nome
            </div>
          </HeadCell>
        </tr>
      </thead>
      <tbody>
        {instruments.map(n => <Row key={n} $on={n === 'EUR/USD'}><td>{n}</td></Row>)}
      </tbody>
    </List>
  </ListWindow>
);

/* ---------- code editor window ---------- */

const EditorWindow = styled.section`
  position: absolute;
  left: 0;
  bottom: 48px;
  width: 704px;
  height: 561px;
  display: flex;
  flex-direction: column;
  padding: 0 11px 12px 12px;
  border: 1px solid #b0b0b0;
  background: #ebebeb;
`;
const EditorTitle = styled.div`
  height: 24px;
  margin: 0 -8px 11px -9px;
  display: flex;
  align-items: center;
  gap: 2px;
  border-bottom: 1px solid #aaa;
  background: #f7f7f7;
`;
const Group = styled.div`
  flex: 1;
  display: flex;
  flex-direction: column;
  padding: 5px;
  border: 1px solid #aaa;
  border-radius: 4px;
  background: #f4f4f4;
`;
const GroupHead = styled.div`
  display: flex;
  align-items: center;
  gap: 5px;
  height: 19px;
  margin-bottom: 5px;
  font-weight: 700;
  button { width: 19px; height: 19px; border: 1px solid #aaa; border-radius: 3px; background: #fafafa; }
`;
const Code = styled.div`
  flex: 1;
  display: grid;
  grid-template: 31px 1fr / 36px 1fr;
  border: 1px solid #c4c4c4;
  font: 12px/17px "Liberation Mono", monospace;
`;
const CodeTools = styled.div`
  grid-column: 1 / 3;
  display: flex;
  align-items: center;
  gap: 12px;
  padding-left: 5px;
  border-bottom: 1px solid #c4c4c4;
`;
const Gutter = styled.pre`
  margin: 0;
  padding: 2px 4px 0 0;
  text-align: right;
  font: inherit;
  border-right: 1px solid #c4c4c4;
`;
const Source = styled.pre`
  margin: 0;
  padding-top: 2px;
  font: inherit;
  background: #fff;
  b { font-weight: 400; color: #5020c0; display: block; }
  i { display: block; height: 17px; background: #e4e4e4; }
`;
const EditorFoot = styled.div`
  display: flex;
  align-items: center;
  height: 38px;
  padding: 8px 0 0 6px;
`;
const Check = styled.label`
  display: flex;
  align-items: center;
  gap: 4px;
  width: 258px;
  input {
    appearance: none;
    width: 12px;
    height: 12px;
    border: 1px solid #777;
    background: #fff;
    display: grid;
    place-items: center;
  }
  input:checked::before {
    content: '';
    width: 4px;
    height: 8px;
    border: solid #111;
    border-width: 0 2px 2px 0;
    transform: rotate(40deg);
  }
`;
const PushButton = styled.button`
  width: 138px;
  height: 24px;
  border: 1px solid #9a9a9a;
  border-radius: 4px;
  background: linear-gradient(#fff, #f0f0f0);
`;

const Editor = () => (
  <EditorWindow>
    <EditorTitle><Candles />Creazione</EditorTitle>
    <Group>
      <GroupHead><IconButton aria-label="Variabili"><Wrench /></IconButton>Varia</GroupHead>
      <Code>
        <CodeTools>
          <svg width="15" height="17"><g fill="none" stroke="#555" strokeWidth="1.500"><path d="M3 0l7 12M12 0L5 12" /><circle cx="3.500" cy="13.500" r="2.500" /><circle cx="11.500" cy="13.500" r="2.500" /></g></svg>
          <svg width="17" height="18"><path d="M.500.500h7l3 3v9H.500z" fill="#fff" stroke="#888" /><path d="M5.500 5.500h7l3 3v9h-10z" fill="#fff" stroke="#888" /></svg>
        </CodeTools>
        <Gutter>{'1\n\n2\n3'}</Gutter>
        <Source>x<b>AN</b><b>RE</b><i /></Source>
      </Code>
      <EditorFoot>
        <Check><input type="checkbox" defaultChecked />Mantieni la finestra aperta</Check>
        <PushButton>Convalida programma</PushButton>
      </EditorFoot>
    </Group>
  </EditorWindow>
);

/* ---------- taskbar ---------- */

const Taskbar = styled.footer`
  position: relative;
  height: 32px;
  display: flex;
  align-items: center;
  padding: 0 4px 0 2px;
  background: #0b0b0d;
  color: #f0f0f0;
  font: 12px/17px ${SHELL};
`;
const Start = styled.button`
  width: 55px;
  height: 22px;
  margin-right: 41px;
  display: flex;
  align-items: center;
  gap: 2px;
  padding: 0 2px;
  border: 1px solid;
  border-color: #fff #777 #777 #fff;
  background: #dcdcdc;
  color: #000;
  font: 700 11px/16px ${SHELL};
`;
const TaskButton = styled.button<{ $run?: boolean; $active?: boolean }>`
  width: 37px;
  height: 32px;
  padding: 0 4px;
  border: 0;
  background: ${p => (p.$active ? '#3a3a3c' : 'none')};
  display: grid;
  place-items: center;
  box-shadow: ${p => (p.$run ? 'inset 0 -2px #0b0b0d, inset 0 -4px #e08c94' : 'none')};
`;
const Tray = styled.div`
  display: flex;
  align-items: center;
  gap: 8px;
`;
const Language = styled.span`
  padding: 0 1px 0 5px;
`;
const Clock = styled.time`
  width: 74px;
  text-align: center;
`;
const TrayEnd = styled.span`
  width: 37px;
  height: 32px;
  display: flex;
  align-items: center;
  border-right: 1px solid #444;
`;
const Chevrons = styled.span`
  align-self: flex-start;
  font-size: 16px;
  line-height: 16px;
  margin-right: 4px;
`;
const Tile = styled.text`
  font: 700 9px ${SHELL};
  fill: #fff;
`;
const office = (c: string, t: string) => (
  <g><path d="M9 3h8v12H9z" fill="#fff" stroke={c} /><path d="M11 6h5M11 9h5M11 12h5" stroke={c} /><path d="M1 2l10-1v16L1 16z" fill={c} /><Tile x="2" y="12">{t}</Tile></g>
);
const apps: { name: string; run?: boolean; art: React.ReactNode }[] = [
  { name: 'Editor', art: <g><path d="M2 2h12v14H2z" fill="#f4f4e0" /><path d="M2 2h12v3H2z" fill="#555" /><path d="M2 12h12v5H2z" fill="#50a830" /><path d="M7 12l9-10" stroke="#e0a020" strokeWidth="2.500" /></g> },
  { name: 'Esplora file', art: <g><path d="M1 3h6l2 2h8v11H1z" fill="#f5d778" /><path d="M4 16V9h10v7h-3v-3H7v3z" fill="#3d9ad6" /></g> },
  { name: 'Blocco note', art: <g><path d="M4 2h13l-3 14H1z" fill="#9fcbd8" /><path d="M5 5h10M4 8h10M4 11h9" stroke="#5a8fa0" /><path d="M4 2h13" stroke="#ddd" strokeWidth="2" strokeDasharray="2 1" /></g> },
  { name: 'Archivio', art: <g><path d="M2 2h9v10H2z" fill="#e8b820" /><path d="M2 5h9M2 9h9" stroke="#8a6a00" /><path d="M12 1v15M9 16h8M10 3h6" stroke="#bbb" strokeWidth="2" /></g> },
  { name: 'Paint', art: <g><ellipse cx="8" cy="10" rx="7" ry="6" fill="#cfdce8" /><circle cx="5" cy="9" r="1.500" fill="#d03030" /><circle cx="9" cy="7" r="1.500" fill="#30a030" /><circle cx="6" cy="13" r="1.500" fill="#3060d0" /><path d="M16 1l-2 14" stroke="#d09030" strokeWidth="2" /></g> },
  { name: 'ACDSee', art: <g><circle cx="9" cy="9" r="7.500" fill="#c8c8c8" /><path d="M3 6c3-6 9-6 12 0-4 3-8 3-12 0z" fill="#e88830" /><path d="M9 9l6 1-3 5z" fill="#777" /></g> },
  { name: 'Word', art: office('#2b579a', 'W') },
  { name: 'Outlook', art: office('#0072c6', 'O') },
  { name: 'Publisher', art: office('#077568', 'P') },
  { name: 'Excel', art: office('#217346', 'X') },
  { name: 'Acrobat', art: <g><rect x="1.500" y="1.500" width="15" height="15" fill="#300808" stroke="#c8302c" strokeWidth="1.500" /><path d="M4 13c4-2 5-6 5-9 0 4 2 7 5 7-4-1-7 0-10 2z" fill="none" stroke="#eee" /></g> },
  { name: 'Traduttore', art: <g><path d="M1 1h16v16H1z" fill="#2f5d9c" /><circle cx="7" cy="11" r="4" fill="none" stroke="#fff" strokeWidth="1.500" /><path d="M9 15V6h6M12 3v12M9 3h6M5 11h7" stroke="#fff" fill="none" /></g> },
  { name: 'Firefox', run: true, art: <g><circle cx="9" cy="9" r="8" fill="#f08020" /><circle cx="8" cy="7" r="5" fill="#3058b0" /><path d="M2 5c1 6 5 8 10 6s4-6 2-9c5 5 4 14-4 15S0 11 2 5z" fill="#f8b020" /><path d="M4 9c2 2 5 3 7 1-1 5-7 4-7-1z" fill="#e03820" /></g> },
  { name: 'Sincronizza', art: <g><rect x="1" y="1" width="16" height="16" rx="1" fill="#3a86c8" /><path d="M5 6c3-4 8-2 7 1-1 2-6 3-7 6h8" stroke="#fff" strokeWidth="2.500" fill="none" /></g> },
  { name: 'WhatsApp', run: true, art: <g><circle cx="9" cy="9" r="8" fill="#1fae4b" stroke="#fff" strokeWidth="1.500" /><path d="M6 5c-1 4 3 8 7 8l1-2-2-1-1 1c-2 0-3-2-3-3l1-1-1-2z" fill="#fff" /></g> },
];

const Bar = () => (
  <Taskbar>
    <Start>
      <svg width="17" height="17"><path d="M8.500 1C3 1 0 6 1 11c2 4 5 5 7.500 5s5.500-1 7.500-5c1-5-2-10-7.500-10z" fill="#48b8c0" /><path d="M8.500 15L4 4m4.500 11L8.500 2m0 13L13 4" stroke="#6cc8d0" /><path d="M4 14c3 2 6 2 9 0" stroke="#d8a850" strokeWidth="2" fill="none" /></svg>
      Start
    </Start>
    {apps.map(a => (
      <TaskButton key={a.name} aria-label={a.name} $run={a.run}><svg width="18" height="18">{a.art}</svg></TaskButton>
    ))}
    <TaskButton aria-label="ProRealTime" $run><Candles size={17} /></TaskButton>
    <TaskButton aria-label="ProRealTime grafico" $run $active><Candles size={17} /></TaskButton>
    <Spacer />
    <Tray>
      <span>Desktop</span>
      <Chevrons>»</Chevrons>
      <svg width="24" height="24"><circle cx="11" cy="12" r="10" fill="#1f98d8" stroke="#fff" strokeWidth="1.500" /><path d="M8 9c0-5 7-4 6 0-1 2-3 2-3 5m0 2v2" stroke="#fff" strokeWidth="2.500" fill="none" /><circle cx="19" cy="18" r="5" fill="#e8a830" /><path d="M19 15v6" stroke="#fff" strokeWidth="2" /></svg>
      <svg width="14" height="10"><path d="M1 9l6-6 6 6" stroke="#eee" strokeWidth="1.500" fill="none" /></svg>
      <svg width="16" height="17"><rect width="16" height="17" rx="3" fill="#2f3b78" /><path d="M6 5l-1 4m5-4l-1 4" stroke="#fff" strokeWidth="2" /></svg>
      <svg width="16" height="14"><rect x="1" y="2" width="14" height="11" fill="none" stroke="#ddd" strokeWidth="1.500" /><circle cx="9" cy="8" r="3" fill="none" stroke="#ddd" strokeWidth="1.500" /><path d="M3 3v9" stroke="#ddd" /></svg>
      <svg width="17" height="18"><rect x=".5" y=".5" width="15" height="9" fill="#111" stroke="#ddd" /><path d="M2 2h4v7H2z" fill="#e02020" /><path d="M6.500 1v8M11 1v8" stroke="#ddd" /><path d="M2 12v5m3 0v-4h3v4m-3-2h3m2 0h5m-2.500-3v5" stroke="#ddd" fill="none" /></svg>
      <svg width="15" height="15"><path d="M1 14C1 7 7 1 14 1M4 14c0-5 4-9 10-9M7 14c0-3 3-5 7-5" stroke="#ddd" fill="none" strokeWidth="1.300" /><circle cx="12" cy="13" r="1.500" fill="#ddd" /></svg>
      <svg width="16" height="13"><path d="M1 4h3l4-3v11L4 9H1z" fill="none" stroke="#eee" /><path d="M11 4l4 5m0-5l-4 5" stroke="#eee" /></svg>
      <Language>ITA</Language>
      <Clock>15:25<br />25/07/2018</Clock>
      <TrayEnd><svg width="17" height="17"><path d="M0 1h16v12h-5l-3 3-3-3H0z" fill="#fff" /><path d="M3 4.500h10M3 7.500h10M3 10.500h6" stroke="#111" /></svg></TrayEnd>
    </Tray>
  </Taskbar>
);

/* ---------- overlays ---------- */

const Watermark = styled.div`
  position: absolute;
  left: 37px;
  top: 375px;
  font: 700 244px/320px ${SHELL};
  color: rgba(0, 0, 0, 0.048);
  white-space: nowrap;
  pointer-events: none;
`;
const Marks = styled.svg`
  position: absolute;
  inset: 0;
  width: 100%;
  height: 100%;
  pointer-events: none;
`;

const Arrow = () => (
  <g><path d="M.500 29.500h12v13H.500z" fill="#f4f4f4" stroke="#999" /><path d="M3 41c0-4 1-6 4-6v-3l4 4-4 4v-2c-2 0-3 1-4 3z" fill="#2a5aa0" /></g>
);

const shortcuts: { name: string; art: React.ReactNode }[] = [
  { name: 'Pannello di', art: <g><path d="M4 5h30v30H4z" fill="#4aa8dc" /><path d="M6 7h28v26H6z" fill="#7ac8f0" /><circle cx="15" cy="17" r="7" fill="#eef8ff" stroke="#2878b8" /><path d="M15 17v-7a7 7 0 0 1 7 7z" fill="#e8a840" /><path d="M22 23h5V11h6M10 30h20" stroke="#2878b8" fill="none" /></g> },
  { name: 'EaseUS Mo', art: <g><rect x="0" y="-4" width="42" height="47" rx="6" fill="#2f9fe8" /><path d="M4 16L14 6v6h20m0 8H14v6L4 16" fill="none" stroke="#d8f0ff" strokeWidth="1.500" /><path d="M19 18h15v10H19z" fill="#fff" /></g> },
  { name: 'ACDSee', art: <g><path d="M0 12c6 6 20 8 34 2v26H18C6 38 1 26 0 12z" fill="#c4c4c4" /><path d="M4 12C8 2 20-4 34 1v15C22 19 10 18 4 12z" fill="#e89038" /><circle cx="34" cy="30" r="9" fill="#2a70a8" stroke="#fff" strokeWidth="3" /></g> },
  { name: 'KeyFin', art: <g fill="none" strokeWidth="1.500"><path d="M3 2h18v18H3z" stroke="#e03030" /><path d="M25 2h18v18H25z" stroke="#30a030" /><path d="M3 24h18v18H3z" stroke="#4080d0" /><path d="M25 24h18v18H25z" fill="#e8b020" stroke="#e8b020" /><circle cx="20" cy="17" r="11" fill="#555" stroke="#ccc" /><circle cx="17" cy="13" r="3" stroke="#ddd" strokeWidth="2" /><circle cx="23" cy="13" r="3" stroke="#ddd" strokeWidth="2" /><path d="M17 16l5 9m1-9l-5 9" stroke="#ddd" strokeWidth="2" /></g> },
  { name: 'PDFCre', art: <g><path d="M7 14L20-1h16v43H14L7 30z" fill="#c8181c" /><path d="M7 14L20-1l-2 14z" fill="#7c1014" /><path d="M34 12c-14 4-20 16-18 30h5c0-8 2-12 5-16 1 6 3 10 8 14z" fill="#fff" /></g> },
];

// grass silhouettes rising from the dark bank
const blades = Array.from({ length: 90 }, (_, i) => {
  const x = 185 + i * 4 + ((i * 29) % 7);
  const lean = ((i * 37) % 11) - 5;
  const tall = 10 + ((i * i * 7) % 27);
  return `M${x} 60q${lean} ${-tall / 2} ${lean} ${-tall}`;
}).join('');

export default function App() {
  return (
    <Page>
      <Global />
      <Frame>
        <Screen>
          <Shortcuts aria-label="Desktop">
            {shortcuts.map(s => (
              <Shortcut key={s.name} href="#">
                <svg width="33" height="44">{s.art}<Arrow /></svg>
                {s.name}
              </Shortcut>
            ))}
          </Shortcuts>
          <FileCorner>
            <svg width="50" height="46">
              <path d="M11 0h23l9 9v33H11z" fill="#f2f2f2" /><path d="M34 0v9h9z" fill="#c4c4c4" />
              <path d="M2.500 32.500h12v12h-12z" fill="#f4f4f4" stroke="#999" /><path d="M5 43c0-4 1-6 4-6v-3l4 4-4 4v-2c-2 0-3 1-4 3z" fill="#2a5aa0" />
            </svg>
          </FileCorner>
          <Wallpaper width="580" height="80">
            <defs>
              <linearGradient id="grass" x1="0" y1="0" x2="1" y2="0">
                <stop offset="0" stopColor="#173a08" />
                <stop offset=".2" stopColor="#2c520c" />
                <stop offset=".4" stopColor="#2a4808" />
                <stop offset="1" stopColor="#1a2e08" />
              </linearGradient>
              <linearGradient id="shade" x1="0" y1="0" x2="0" y2="1">
                <stop offset="0" stopColor="#050505" stopOpacity="0" />
                <stop offset=".8" stopColor="#050505" />
              </linearGradient>
            </defs>
            <path d="M20 0h510l50 38v30H60L40 30z" fill="url(#grass)" />
            <path d="M28 0h58L72 26 50 18z" fill="#24500a" />
            <path d="M98 0h110l-8 40H90z" fill="#2e5608" />
            <path d="M84 41h115v9H80z" fill="#16260a" />
            <path d="M84 50h120v30H66z" fill="#0a0f08" />
            <path d="M150 52h50v22h-36z" fill="#16220f" />
            <path d="M95 3l-10 2-17 46 12-2z" fill="#42780f" />
            <rect y="12" x="200" width="380" height="68" fill="url(#shade)" />
            <path d="M0 0h22l22 30 18 26 6 24H0z" fill="#050505" />
            <path d="M190 80c30-24 60-34 130-34 50 0 80 12 130 12h130v22z" fill="#050505" />
            <path d={blades} stroke="#060a04" strokeWidth="1.500" fill="none" opacity=".7" />
          </Wallpaper>
          <DesktopLabel $right={857} href="#">Insert PRT code</DesktopLabel>
          <DesktopLabel $right={503} href="#">Buffetti email</DesktopLabel>
          <Bar />
          <Editor />
          <ListPanel />
          <MainBar />
          <Chart />
          <Watermark>DEMO VERSION</Watermark>
          <Marks aria-hidden>
            <g fill="none" stroke={ORANGE} strokeWidth="5">
              <ellipse cx="121" cy="73" rx="43" ry="24" />
              <ellipse cx="954" cy="104" rx="62" ry="27" />
              <ellipse cx="1154" cy="930" rx="61" ry="24" />
            </g>
            <ellipse cx="1547" cy="107" rx="4" ry="6" fill={ORANGE} />
          </Marks>
        </Screen>
      </Frame>
    </Page>
  );
}
